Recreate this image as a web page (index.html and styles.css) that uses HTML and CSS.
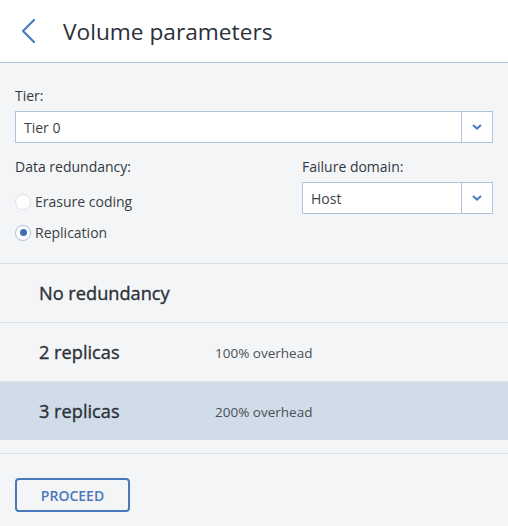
FILE: index.html
```html
<!DOCTYPE html>
<html>
<head>
<meta charset="utf-8">
<link rel="stylesheet" href="styles.css">
</head>
<body>
<div class="page">
  <header class="header">
    <svg class="back" width="16" height="26" viewBox="0 0 16 26"><path d="M13 2 L2 13 L13 24" fill="none" stroke="#4a7abf" stroke-width="2.2" stroke-linecap="round" stroke-linejoin="round"/></svg>
    <h1 class="title">Volume parameters</h1>
  </header>
  <section class="form">
    <div class="field">
      <div class="label">Tier:</div>
      <div class="select">
        <span class="select-value">Tier 0</span>
        <span class="select-btn"><svg width="10" height="6" viewBox="0 0 10 6"><path d="M1 1 L5 4.6 L9 1" fill="none" stroke="#4a7abf" stroke-width="2"/></svg></span>
      </div>
    </div>
    <div class="two-col">
      <div class="col-left">
        <div class="label">Data redundancy:</div>
        <div class="radios">
          <div class="radio-row"><span class="radio"></span><span class="radio-text">Erasure coding</span></div>
          <div class="radio-row"><span class="radio checked"></span><span class="radio-text">Replication</span></div>
        </div>
      </div>
      <div class="col-right">
        <div class="label">Failure domain:</div>
        <div class="select">
          <span class="select-value">Host</span>
          <span class="select-btn"><svg width="10" height="6" viewBox="0 0 10 6"><path d="M1 1 L5 4.6 L9 1" fill="none" stroke="#4a7abf" stroke-width="2"/></svg></span>
        </div>
      </div>
    </div>
  </section>
  <div class="options">
    <div class="option"><span class="opt-name">No redundancy</span></div>
    <div class="option"><span class="opt-name">2 replicas</span><span class="opt-note">100% overhead</span></div>
    <div class="option selected"><span class="opt-name">3 replicas</span><span class="opt-note">200% overhead</span></div>
  </div>
  <footer class="footer">
    <button class="proceed">PROCEED</button>
  </footer>
</div>
</body>
</html>
```
FILE: styles.css
```css
html, body {
  margin: 0;
  padding: 0;
  background: #f4f5f7;
  font-family: "Open Sans", "Liberation Sans", sans-serif;
  color: #30353c;
}
.page {
  width: 508px;
  height: 526px;
  display: flex;
  flex-direction: column;
}
.header {
  flex: none;
  height: 63px;
  box-sizing: border-box;
  background: #ffffff;
  border-bottom: 1px solid #a9c3e4;
  display: flex;
  align-items: center;
}
.back {
  margin-left: 21px;
}
.title {
  margin: 0 0 0 26px;
  font-size: 22.7px;
  font-weight: 400;
  color: #2b3038;
}
.form {
  flex: none;
  padding: 23px 15px 0 15px;
  height: 201px;
  box-sizing: border-box;
  border-bottom: 1px solid #dcdfe3;
}
.label {
  font-size: 14px;
  line-height: 19px;
  color: #33383f;
  margin-bottom: 6px;
}
.select {
  height: 32px;
  box-sizing: border-box;
  border: 1px solid #adc3de;
  background: #ffffff;
  display: flex;
  align-items: center;
}
.select-value {
  flex: 1;
  padding-left: 8px;
  font-size: 14px;
  color: #3a3f46;
}
.select-btn {
  width: 30px;
  height: 100%;
  border-left: 1px solid #adc3de;
  display: flex;
  align-items: center;
  justify-content: center;
}
.two-col {
  display: flex;
  margin-top: 14px;
}
.col-left {
  flex: 1;
}
.col-right {
  width: 191px;
}
.radios {
  padding-top: 4px;
}
.radio-row {
  display: flex;
  align-items: center;
  height: 31px;
}
.radio {
  width: 16px;
  height: 16px;
  box-sizing: border-box;
  border: 1px solid #dfe2e6;
  border-radius: 50%;
  background: #ffffff;
  margin-right: 4px;
  position: relative;
}
.radio.checked {
  border-color: #a9c0e0;
}
.radio.checked::after {
  content: "";
  position: absolute;
  left: 3.5px;
  top: 3.5px;
  width: 7px;
  height: 7px;
  border-radius: 50%;
  background: #3e6db3;
}
.radio-text {
  font-size: 14px;
  color: #3a3f46;
}
.options {
  display: flex;
  flex-direction: column;
}
.option {
  height: 59px;
  box-sizing: border-box;
  border-bottom: 1px solid #dcdfe3;
  display: flex;
  align-items: center;
  padding-left: 39px;
}
.option.selected {
  background: #d0dce8;
  border-bottom: none;
  height: 58px;
}
.opt-name {
  width: 176px;
  font-size: 18.2px;
  font-weight: 400;
  -webkit-text-stroke: 0.35px #2b3038;
  color: #2b3038;
}
.opt-note {
  font-size: 13.5px;
  color: #4a4f56;
  margin-top: 2px;
}
.footer {
  margin-top: 13px;
  border-top: 1px solid #dcdfe3;
  padding: 24px 15px;
}
.proceed {
  width: 115px;
  height: 34px;
  border: 2px solid #4b78b8;
  border-radius: 4px;
  background: transparent;
  color: #4b78b8;
  font-family: "Open Sans", "Liberation Sans", sans-serif;
  font-size: 14px;
  font-weight: 600;
  padding: 0;
}
```
